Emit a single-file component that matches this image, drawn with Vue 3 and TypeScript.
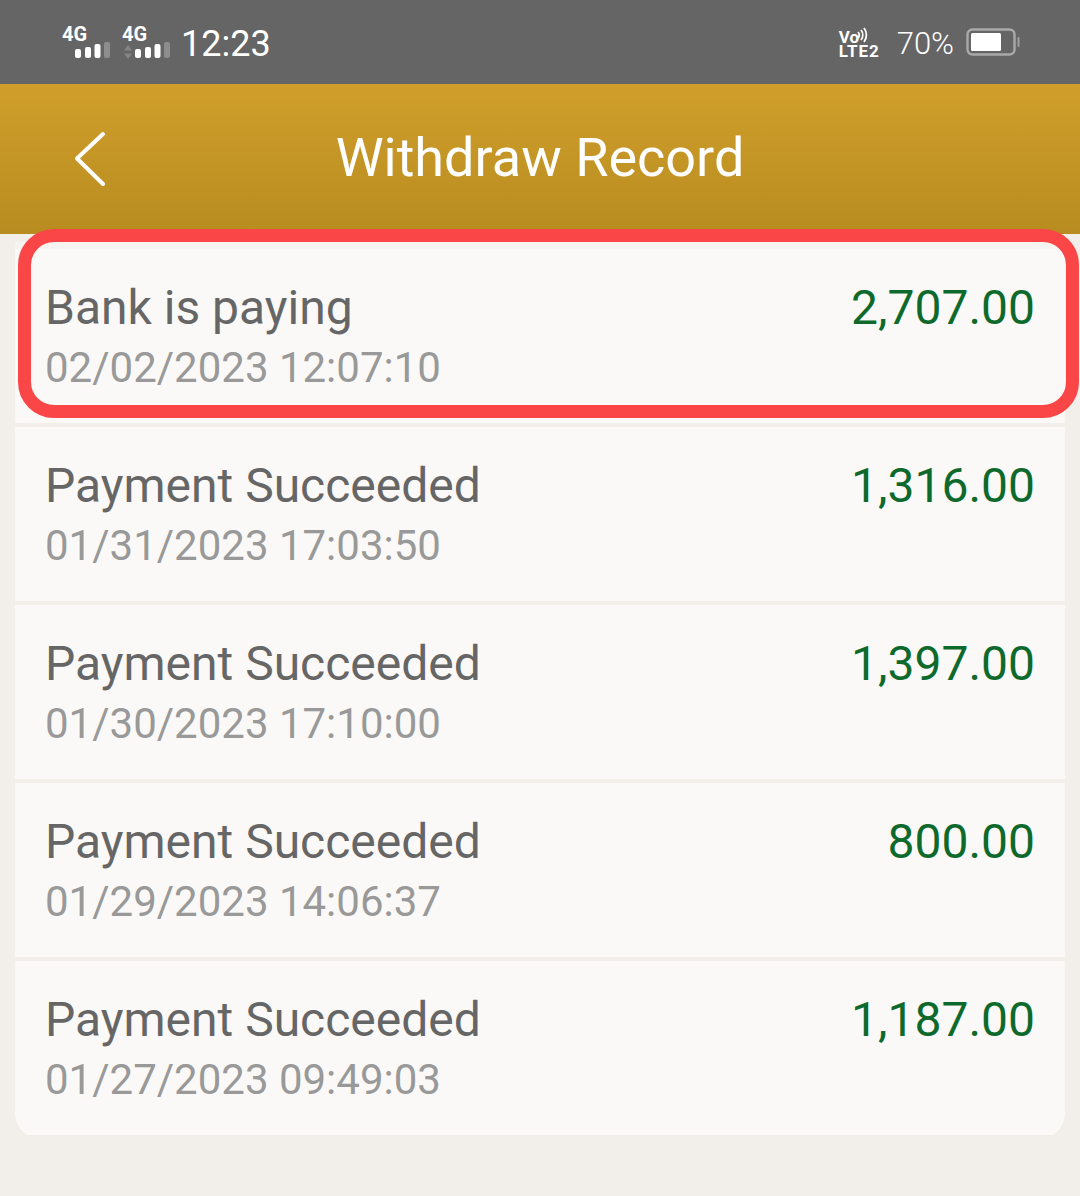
<script setup lang="ts">
interface WithdrawRecord {
  status: string;
  time: string;
  amount: string;
}

const records: WithdrawRecord[] = [
  { status: 'Bank is paying', time: '02/02/2023 12:07:10', amount: '2,707.00' },
  { status: 'Payment Succeeded', time: '01/31/2023 17:03:50', amount: '1,316.00' },
  { status: 'Payment Succeeded', time: '01/30/2023 17:10:00', amount: '1,397.00' },
  { status: 'Payment Succeeded', time: '01/29/2023 14:06:37', amount: '800.00' },
  { status: 'Payment Succeeded', time: '01/27/2023 09:49:03', amount: '1,187.00' }
];

const signalBars = [
  { x: 0, y: 7, h: 9, on: true },
  { x: 10, y: 5, h: 11, on: true },
  { x: 19.5, y: 2, h: 14, on: true },
  { x: 29, y: 0, h: 16, on: false }
];
</script>

<template>
  <div class="page">
    <div class="status-bar">
      <div class="status-left">
        <div class="network">
          <span class="net-label">4G</span>
          <svg class="bars" width="36" height="16" viewBox="0 0 36 16">
            <rect
              v-for="b in signalBars"
              :key="b.x"
              :x="b.x"
              :y="b.y"
              width="6"
              :height="b.h"
              rx="2"
              :fill="b.on ? '#fff' : '#8d8d8d'"
            />
          </svg>
        </div>
        <div class="network second">
          <span class="net-label">4G</span>
          <svg class="arrows" width="10" height="14" viewBox="0 0 10 14">
            <path d="M5 0 9 5.5H1zM5 14 1 8.5h8z" fill="#858585" />
          </svg>
          <svg class="bars" width="36" height="16" viewBox="0 0 36 16">
            <rect
              v-for="b in signalBars"
              :key="b.x"
              :x="b.x"
              :y="b.y"
              width="6"
              :height="b.h"
              rx="2"
              :fill="b.on ? '#fff' : '#8d8d8d'"
            />
          </svg>
        </div>
        <span class="clock">12:23</span>
      </div>
      <div class="status-right">
        <div class="volte">
          <div class="vo-line">
            <span>Vo</span>
            <svg class="waves" width="11" height="16" viewBox="0 0 11 16">
              <path d="M1 5a4.5 4.5 0 0 1 0 6M4 3a8 8 0 0 1 0 10M7 1a11.5 11.5 0 0 1 0 14" fill="none" stroke="#fff" stroke-width="1.8" />
            </svg>
          </div>
          <div class="lte-line">LTE2</div>
        </div>
        <span class="percent">70%</span>
        <svg width="54" height="28" viewBox="0 0 54 28">
          <rect x="1.5" y="1.5" width="47" height="25" rx="5" fill="none" stroke="#a9a9a9" stroke-width="2.4" />
          <rect x="5" y="5" width="30" height="18" rx="1.5" fill="#fff" />
          <rect x="51.5" y="9" width="2" height="10" rx="1" fill="#a0a0a0" />
        </svg>
      </div>
    </div>

    <header class="nav-bar">
      <svg class="back" width="34" height="56" viewBox="0 0 34 56">
        <path d="M30 3 4 27.5 30 53" fill="none" stroke="#fff" stroke-width="4" stroke-linecap="round" stroke-linejoin="round" />
      </svg>
      <h1>Withdraw Record</h1>
    </header>

    <div class="record-list">
      <div v-for="(record, i) in records" :key="i" class="record">
        <div class="record-info">
          <div class="record-status">{{ record.status }}</div>
          <div class="record-time">{{ record.time }}</div>
        </div>
        <div class="record-amount">{{ record.amount }}</div>
      </div>
      <div class="highlight"></div>
    </div>
  </div>
</template>

<style>
html,
body {
  margin: 0;
  background: #f2efea;
}
</style>

<style scoped>
.page {
  width: 1080px;
  height: 1196px;
  overflow: hidden;
  background: #f2efea;
  font-family: Roboto, "Liberation Sans", sans-serif;
}

.status-bar {
  height: 84px;
  box-sizing: border-box;
  padding: 0 60px 0 63px;
  display: flex;
  justify-content: space-between;
  align-items: center;
  background: #656565;
  color: #fff;
}

.status-left,
.status-right {
  display: flex;
  align-items: center;
}

.network {
  position: relative;
  width: 48px;
  height: 34px;
  margin-top: -2px;
  margin-right: 12px;
}

.network.second {
  margin-right: 10px;
}

.net-label {
  position: absolute;
  left: -1px;
  top: -1px;
  font-size: 20px;
  font-weight: 700;
  line-height: 22px;
}

.bars {
  position: absolute;
  left: 12px;
  bottom: 0;
}

.arrows {
  position: absolute;
  left: 0;
  bottom: -1px;
}

.clock {
  margin-top: 4px;
  font-size: 36px;
  line-height: 44px;
}

.volte {
  width: 40px;
  margin-top: 3px;
  margin-right: 18px;
  font-weight: 700;
}

.vo-line {
  display: flex;
  align-items: center;
  height: 14px;
  font-size: 17px;
  line-height: 14px;
}

.waves {
  margin-top: -4px;
  margin-left: -2px;
}

.lte-line {
  font-size: 17px;
  line-height: 14px;
  letter-spacing: 1px;
}

.percent {
  margin-top: 2px;
  margin-right: 12px;
  font-size: 31px;
  font-weight: 300;
}

.nav-bar {
  position: relative;
  height: 150px;
  display: flex;
  align-items: center;
  justify-content: center;
  background: linear-gradient(#d09f2b, #b88c20);
}

.nav-bar h1 {
  margin: 0 0 4px;
  font-size: 54px;
  font-weight: 400;
  color: #fff;
}

.back {
  position: absolute;
  left: 73px;
  top: 47px;
}

.record-list {
  position: relative;
  margin: 8px 15px 0;
  padding-top: 7px;
  border-radius: 0 0 26px 26px;
  background: linear-gradient(#f6f4f0 7px, #fbf9f7 7px);
}

.record {
  height: 174px;
  border-bottom: 4px solid #f2efea;
  padding: 0 30px;
  display: flex;
  justify-content: space-between;
}

.record:last-of-type {
  height: 176px;
  border-bottom: 0;
}

.record-status {
  margin-top: 29px;
  font-size: 48px;
  line-height: 60px;
  color: #666;
}

.record-time {
  margin-top: 2px;
  font-size: 42px;
  line-height: 56px;
  color: #999;
}

.record-amount {
  margin-top: 29px;
  font-size: 48px;
  line-height: 60px;
  color: #0e6a2c;
}

.highlight {
  position: absolute;
  left: 3px;
  top: -13px;
  width: 1061px;
  height: 189px;
  box-sizing: border-box;
  border: 13px solid #fb4648;
  border-radius: 36px;
}
</style>
